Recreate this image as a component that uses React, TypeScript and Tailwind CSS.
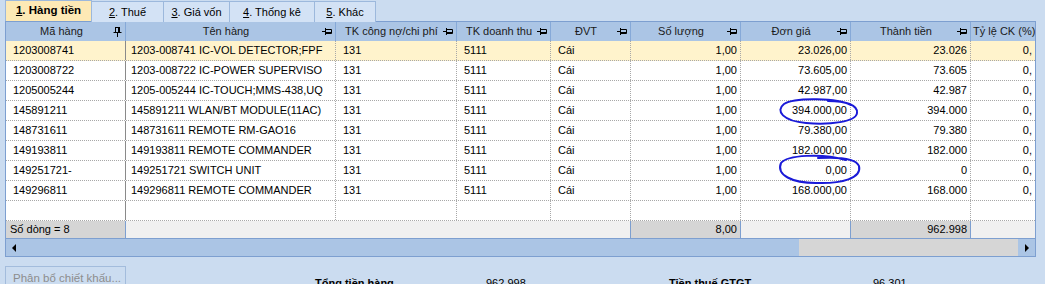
import React from "react";

const cols = [
  { key: "ma", label: "Mã hàng", w: "w-[120px]", align: "left", pin: "v" },
  { key: "ten", label: "Tên hàng", w: "w-[210px]", align: "left", pin: "h" },
  { key: "tkcn", label: "TK công nợ/chi phí", w: "w-[121px]", align: "left", pin: "h" },
  { key: "tkdt", label: "TK doanh thu", w: "w-[94px]", align: "left", pin: "h" },
  { key: "dvt", label: "ĐVT", w: "w-[80px]", align: "left", pin: "h" },
  { key: "sl", label: "Số lượng", w: "w-[110px]", align: "right", pin: "h" },
  { key: "dg", label: "Đơn giá", w: "w-[110px]", align: "right", pin: "h" },
  { key: "tt", label: "Thành tiền", w: "w-[120px]", align: "right", pin: "h" },
  { key: "ck", label: "Tỷ lệ CK (%)", w: "w-[64px]", align: "right", pin: "" },
];

const rows = [
  ["1203008741", "1203-008741 IC-VOL DETECTOR;FPF", "23.026,00", "23.026"],
  ["1203008722", "1203-008722 IC-POWER SUPERVISO", "73.605,00", "73.605"],
  ["1205005244", "1205-005244 IC-TOUCH;MMS-438,UQ", "42.987,00", "42.987"],
  ["145891211", "145891211 WLAN/BT MODULE(11AC)", "394.000,00", "394.000"],
  ["148731611", "148731611 REMOTE RM-GAO16", "79.380,00", "79.380"],
  ["149193811", "149193811 REMOTE COMMANDER", "182.000,00", "182.000"],
  ["149251721-", "149251721 SWITCH UNIT", "0,00", "0"],
  ["149296811", "149296811 REMOTE COMMANDER", "168.000,00", "168.000"],
];

function PinH() {
  return (
    <svg width="10" height="9" viewBox="0 0 10 9" className="shrink-0">
      <path d="M0 4.5H3.5M3.5 1V8M4 2.5H9.5V6.5H4M4 5.5H9.5" stroke="#000" strokeWidth="1" fill="none" />
    </svg>
  );
}

function PinV() {
  return (
    <svg width="9" height="10" viewBox="0 0 9 10" className="shrink-0">
      <path d="M2.5 0.5V5M6.5 0.5V5M2 0.5H7M5.5 0.5V5M0.5 5.5H8.5M4.5 5.5V10" stroke="#000" strokeWidth="1" fill="none" />
    </svg>
  );
}

const tabs = [
  { n: "1", t: ". Hàng tiền", w: "w-[87px]", active: true },
  { n: "2", t: ". Thuế", w: "w-[73px]" },
  { n: "3", t: ". Giá vốn", w: "w-[67px]" },
  { n: "4", t: ". Thống kê", w: "w-[86px]" },
  { n: "5", t: ". Khác", w: "w-[62px]" },
];

export default function App() {
  return (
    <div className="relative w-[1045px] h-[284px] overflow-hidden bg-[#cbdcf0] font-['Liberation_Sans',Arial,sans-serif] text-[11px] text-black">
      {/* Tabs */}
      <div className="flex h-[21px] pl-[5px]">
        {tabs.map((t) => (
          <div
            key={t.n}
            className={`${t.w} h-[21px] flex items-center justify-center border border-b-0 border-[#9cb8dc] -ml-px first:ml-0 ${
              t.active ? "bg-[#fde9b5] font-bold text-[11.5px]" : "bg-[#d3e2f5] mt-px h-[20px]"
            }`}
          >
            <span className="underline">{t.n}</span>
            {t.t}
          </div>
        ))}
      </div>

      {/* Grid */}
      <div className="ml-[5px] w-[1031px] border border-[#7d9fd0] bg-white">
        {/* Header */}
        <div className="flex h-[19px] bg-[#abc5e5]">
          {cols.map((c, i) => (
            <div
              key={c.key}
              className={`${c.w} flex items-center shrink-0 overflow-hidden whitespace-nowrap ${
                i < cols.length - 1 ? "border-r border-[#86a9d8]" : ""
              } ${c.pin ? "pr-[3px]" : "pl-[2px]"}`}
            >
              <span className={`${c.pin ? "flex-1 text-center pl-[4px]" : ""} text-[#1a1a1a]`}>{c.label}</span>
              {c.pin === "h" && <PinH />}
              {c.pin === "v" && <PinV />}
            </div>
          ))}
        </div>

        {/* Rows */}
        {rows.map((r, ri) => {
          const vals = [r[0], r[1], "131", "5111", "Cái", "1,00", r[2], r[3], "0,"];
          return (
            <div
              key={ri}
              className={`flex h-[20px] border-b border-dotted border-[#a8a8a8] ${ri === 0 ? "bg-[#fff3cc]" : "bg-white"}`}
            >
              {vals.map((v, ci) => (
                <div
                  key={ci}
                  className={`${cols[ci].w} shrink-0 flex items-center overflow-hidden whitespace-nowrap ${
                    ci === 0
                      ? "border-r border-solid border-[#8a8a8a] pl-[7px]"
                      : ci < cols.length - 1
                      ? "border-r border-dotted border-[#a8a8a8]"
                      : ""
                  } ${cols[ci].align === "right" ? "justify-end pr-[3px]" : ci === 0 ? "" : ci === 1 ? "pl-[5px]" : "pl-[7px]"}`}
                >
                  {v}
                </div>
              ))}
            </div>
          );
        })}

        {/* Empty new-row */}
        <div className="flex h-[20px] border-b border-dotted border-[#a8a8a8]">
          {cols.map((c, ci) => (
            <div
              key={c.key}
              className={`${c.w} shrink-0 ${
                ci === 0
                  ? "border-r border-solid border-[#8a8a8a]"
                  : ci < cols.length - 1
                  ? "border-r border-dotted border-[#a8a8a8]"
                  : ""
              }`}
            />
          ))}
        </div>

        {/* Summary */}
        <div className="flex h-[18px] border-b border-[#7d9fd0] bg-[#f0f0f0]">
          <div className="w-[120px] shrink-0 bg-[#d5d5d5] border-r border-[#7d9fd0] flex items-center pl-[4px]">
            Số dòng = 8
          </div>
          <div className="w-[505px] shrink-0 border-r border-[#7d9fd0]" />
          <div className="w-[110px] shrink-0 bg-[#d5d5d5] border-r border-[#7d9fd0] flex items-center justify-end pr-[3px]">
            8,00
          </div>
          <div className="w-[110px] shrink-0 border-r border-[#7d9fd0]" />
          <div className="w-[120px] shrink-0 bg-[#d5d5d5] border-r border-[#7d9fd0] flex items-center justify-end pr-[3px]">
            962.998
          </div>
          <div className="flex-1" />
        </div>

        {/* Horizontal scrollbar */}
        <div className="flex h-[17px] bg-[#abc5e5]">
          <div className="w-[793px] shrink-0 flex items-center pl-[6px]">
            <svg width="5" height="8" viewBox="0 0 5 8">
              <path d="M4 0V8L0 4Z" fill="#000" />
            </svg>
          </div>
          <div className="w-[219px] shrink-0 bg-[#d6d6d6]" />
          <div className="flex-1 flex items-center justify-center">
            <svg width="5" height="8" viewBox="0 0 5 8">
              <path d="M1 0V8L5 4Z" fill="#000" />
            </svg>
          </div>
        </div>
      </div>

      {/* Footer */}
      <div className="flex items-start mt-[9px] pl-[5px]">
        <div className="w-[121px] h-[26px] shrink-0 border border-[#a3bcdc] flex items-center pl-[7px] text-[#8d8d8d] text-[11.5px]">
          Phân bổ chiết khấu...
        </div>
        <div className="ml-[189px] w-[171px] shrink-0 pt-[9px] font-bold">Tổng tiền hàng</div>
        <div className="w-[183px] shrink-0 pt-[9px]">962.998</div>
        <div className="w-[204px] shrink-0 pt-[9px] font-bold">Tiền thuế GTGT</div>
        <div className="pt-[9px]">96.301</div>
      </div>

      {/* Hand-drawn annotations */}
      <svg className="absolute left-0 top-0 pointer-events-none" width="1045" height="284">
        <path
          d="M851 105 C838 98 795 97 784 104 C775 111 783 121 806 123 C830 125 856 122 857 113 C858 105 846 101 828 101"
          stroke="#1a1ad8"
          strokeWidth="2"
          fill="none"
          strokeLinecap="round"
        />
        <path
          d="M846 160 C822 153 787 155 781 163 C776 175 792 183 816 183 C842 184 862 178 859 166 C856 158 836 157 818 158"
          stroke="#1a1ad8"
          strokeWidth="2"
          fill="none"
          strokeLinecap="round"
        />
      </svg>
    </div>
  );
}
